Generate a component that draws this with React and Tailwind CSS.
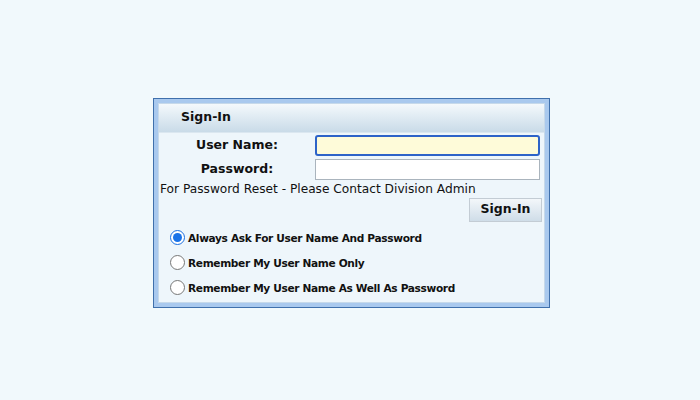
import { useState } from 'react';

const SignIn = () => {
    const [mode, setMode] = useState('always');

    const options = [
        { id: 'always', label: 'Always Ask For User Name And Password' },
        { id: 'user', label: 'Remember My User Name Only' },
        { id: 'both', label: 'Remember My User Name As Well As Password' },
    ];

    return (
        <div
            className="w-[700px] h-[400px] bg-[#f1f9fc] flex items-center justify-center"
            style={{ fontFamily: '"DejaVu Sans", Verdana, sans-serif' }}
        >
            {/* Outer frame */}
            <div className="w-[397px] h-[210px] border border-[#3f70ac] bg-[#a9c9ee] p-1 mt-[5px] ml-[3px]">
                <div className="h-full border border-[#c6d9ea] bg-[#eef6fb] flex flex-col">
                    {/* Header */}
                    <div className="h-[29px] flex items-center pl-[22px] bg-gradient-to-b from-[#f4f9fc] to-[#c9dbe8] border-b border-[#dbe7f0]">
                        <span className="text-[12.5px] font-bold text-[#111]">Sign-In</span>
                    </div>

                    {/* Fields */}
                    <div className="grid grid-cols-[156px_1fr] gap-y-[3px] pt-[2px] pr-[5px]">
                        <div className="flex items-center justify-center text-[12.5px] font-bold text-[#111]">User Name:</div>
                        <input
                            autoFocus
                            className="h-[21px] w-[225px] rounded-[3px] border-2 border-[#2d63c8] bg-[#fefbd9] outline-none px-1 text-xs"
                        />
                        <div className="flex items-center justify-center text-[12.5px] font-bold text-[#111]">Password:</div>
                        <input
                            type="password"
                            className="h-[21px] w-[225px] border border-[#aab4bd] bg-white outline-none px-1 text-xs"
                        />
                    </div>
                    <div className="pl-[1px] pt-[1px] text-[12.2px] text-[#111] leading-[17px]">
                        For Password Reset - Please Contact Division Admin
                    </div>
                    <div className="flex justify-end pr-[2px]">
                        <button className="h-[24px] w-[73px] border border-[#c3ccd4] bg-gradient-to-b from-[#f3f7fa] to-[#cfdde8] text-[12.5px] font-bold text-[#111]">
                            Sign-In
                        </button>
                    </div>

                    {/* Options */}
                    <div className="flex flex-col gap-[7px] pl-[11px] pt-[7px]">
                        {options.map((o) => (
                            <label key={o.id} className="flex items-center gap-[3px] cursor-pointer h-[18px]">
                                <span
                                    className={`w-[15px] h-[15px] rounded-full flex items-center justify-center ${
                                        mode === o.id
                                            ? 'border border-[#1a6fe0] bg-white'
                                            : 'border border-[#777] bg-white'
                                    }`}
                                    onClick={() => setMode(o.id)}
                                >
                                    {mode === o.id && <span className="w-[9px] h-[9px] rounded-full bg-[#1a73e8]" />}
                                </span>
                                <span className="text-[10.6px] font-bold tracking-[-0.35px] text-[#111] mt-[3px]">{o.label}</span>
                            </label>
                        ))}
                    </div>
                </div>
            </div>
        </div>
    );
};

export default function App() {
    return <SignIn />;
}
